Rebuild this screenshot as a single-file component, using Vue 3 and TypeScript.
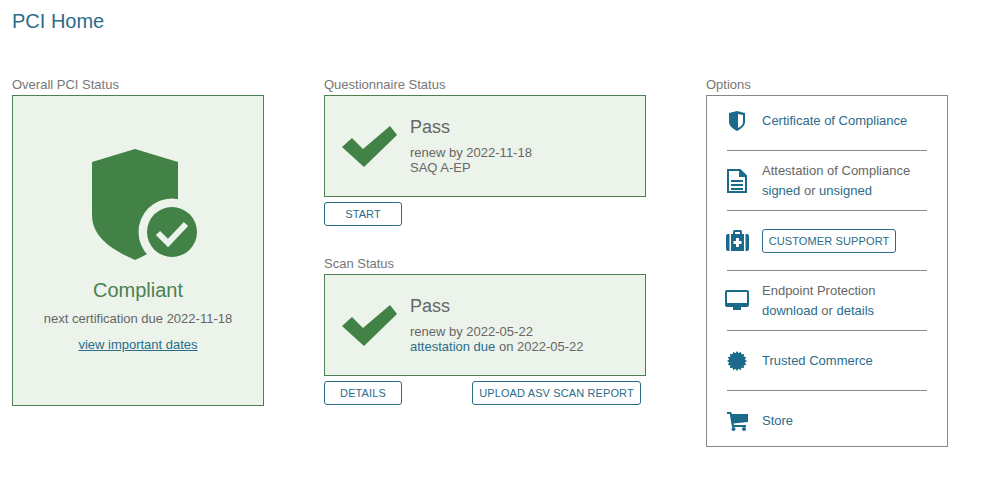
<script setup lang="ts">
const teeth = 16
const badgePoints = Array.from({ length: teeth * 2 }, (_, i) => {
  const r = i % 2 === 0 ? 10 : 8
  const a = (Math.PI * i) / teeth
  return `${(10 + r * Math.sin(a)).toFixed(2)},${(10 - r * Math.cos(a)).toFixed(2)}`
}).join(' ')
</script>

<template>
  <div class="page">
    <h1 class="title">PCI Home</h1>
    <div class="columns">
      <section class="col-left">
        <div class="label">Overall PCI Status</div>
        <div class="overall">
          <svg class="shield" width="106" height="112" viewBox="0 0 106 112">
            <path d="M43 0 L86 13 V64 C86 85 64 102 43 111 C20 101 0 88 0 66 V13 Z" fill="#428246" />
            <circle cx="80" cy="83" r="33.500" fill="#ecf3ea" />
            <circle cx="80" cy="83" r="25" fill="#428246" />
            <path d="M66 84 L76 94 L94 75" fill="none" stroke="#ecf3ea" stroke-width="6" />
          </svg>
          <div class="compliant">Compliant</div>
          <div class="due">next certification due 2022-11-18</div>
          <a class="dates">view important dates</a>
        </div>
      </section>

      <section class="col-mid">
        <div class="label">Questionnaire Status</div>
        <div class="status">
          <svg class="check" width="55" height="42" viewBox="0 0 55 42"><path d="M0 21 L10 12 L21 23 L48 0 L55 9 L22 41 Z" fill="#428246" /></svg>
          <div>
            <div class="pass">Pass</div>
            <div class="line">renew by 2022-11-18</div>
            <div class="line">SAQ A-EP</div>
          </div>
        </div>
        <div class="actions"><button class="btn wide">START</button></div>

        <div class="label scan">Scan Status</div>
        <div class="status">
          <svg class="check" width="55" height="42" viewBox="0 0 55 42"><path d="M0 21 L10 12 L21 23 L48 0 L55 9 L22 41 Z" fill="#428246" /></svg>
          <div>
            <div class="pass">Pass</div>
            <div class="line">renew by 2022-05-22</div>
            <div class="line"><a class="link">attestation due</a> on 2022-05-22</div>
          </div>
        </div>
        <div class="actions between">
          <button class="btn wide">DETAILS</button>
          <button class="btn upload">UPLOAD ASV SCAN REPORT</button>
        </div>
      </section>

      <section class="col-right">
        <div class="label">Options</div>
        <div class="options">
          <div class="opt first">
            <span class="ico"><svg width="16" height="20" viewBox="0 0 16 20"><path fill-rule="evenodd" d="M8 0 L16 2 V11 C16 15 12 18 8 20 C4 18 0 15 0 11 V2 Z M9 3 V17 C12 15.500 14 13.500 14 11 V4 Z" fill="#1c6a8a"/></svg></span>
            <div class="opt-text"><a class="link">Certificate of Compliance</a></div>
          </div>
          <div class="opt">
            <span class="ico"><svg width="20" height="24" viewBox="0 0 20 24"><path fill="none" stroke="#1c6a8a" stroke-width="2" d="M1 1 H13 L19 7 V23 H1 Z"/><path fill="#1c6a8a" d="M12 1 H14 L19 6 V8 H12 Z M4 11 H16 V13 H4 Z M4 15 H16 V17 H4 Z M4 19 H16 V21 H4 Z"/></svg></span>
            <div class="opt-text">Attestation of Compliance<br /><a class="link">signed</a> or <a class="link">unsigned</a></div>
          </div>
          <div class="opt">
            <span class="ico"><svg width="23" height="21" viewBox="0 0 23 21"><path fill="#1c6a8a" fill-rule="evenodd" d="M7 4 V1.500 Q7 0 8.500 0 H14.500 Q16 0 16 1.500 V4 H14 V2 H9 V4 Z M5 4 H18 V21 H5 Z M10 8 V11 H7.500 V14 H10 V17 H13 V14 H15.500 V11 H13 V8 Z M0 6 Q0 4 2 4 H3.500 V21 H2 Q0 21 0 19 Z M19.500 4 H21 Q23 4 23 6 V19 Q23 21 21 21 H19.500 Z"/></svg></span>
            <div class="opt-text"><button class="btn support">CUSTOMER SUPPORT</button></div>
          </div>
          <div class="opt">
            <span class="ico"><svg width="24" height="21" viewBox="0 0 24 21"><path fill="#1c6a8a" fill-rule="evenodd" d="M2 0 H22 Q24 0 24 2 V15 Q24 17 22 17 H2 Q0 17 0 15 V2 Q0 0 2 0 Z M2 2 V13 H22 V2 Z M8 17 H16 V20 H8 Z"/></svg></span>
            <div class="opt-text">Endpoint Protection<br /><a class="link">download</a> or <a class="link">details</a></div>
          </div>
          <div class="opt">
            <span class="ico"><svg width="20" height="20" viewBox="0 0 20 20"><polygon :points="badgePoints" fill="#1c6a8a"/></svg></span>
            <div class="opt-text"><a class="link">Trusted Commerce</a></div>
          </div>
          <div class="opt">
            <span class="ico"><svg width="21" height="19" viewBox="0 0 21 19"><path fill="#1c6a8a" d="M0 0 H4 L5 2 H21 V10 L6.500 11.500 L7 13 H19 V15 H5 L2.700 2 H0 Z"/><circle cx="6.500" cy="17" r="2" fill="#1c6a8a"/><circle cx="17" cy="17" r="2" fill="#1c6a8a"/></svg></span>
            <div class="opt-text"><a class="link">Store</a></div>
          </div>
        </div>
      </section>
    </div>
  </div>
</template>

<style scoped>
.page {
  box-sizing: border-box;
  width: 994px;
  height: 481px;
  padding: 10px 12px 0;
  background: #fff;
  color: #666;
  font-family: "Liberation Sans", Arial, sans-serif;
  font-size: 13px;
  overflow: hidden;
}
.title {
  margin: 0;
  font-size: 20px;
  font-weight: 400;
  line-height: 23px;
  color: #2b6c8a;
}
.columns {
  display: flex;
  margin-top: 43px;
}
.label {
  line-height: 17px;
  padding-bottom: 2px;
  color: #777;
}
.col-left { width: 252px; margin-right: 60px; }
.col-mid { width: 322px; margin-right: 60px; }
.col-right { width: 242px; }
.overall {
  box-sizing: border-box;
  height: 311px;
  border: 1px solid #4d7f52;
  background: #ecf3ea;
  display: flex;
  flex-direction: column;
  align-items: center;
  padding-top: 53px;
}
.shield { margin-left: 14px; flex: none; }
.compliant { margin-top: 17px; font-size: 20px; line-height: 24px; color: #4d7f52; }
.due { margin-top: 7px; line-height: 20px; }
.dates { margin-top: 6px; line-height: 20px; color: #2b6c8a; text-decoration: underline; }
.status {
  box-sizing: border-box;
  height: 102px;
  border: 1px solid #4d7f52;
  background: #ecf3ea;
  display: flex;
  align-items: flex-start;
  padding: 21px 0 0 17px;
}
.check { margin: 9px 13px 0 0; flex: none; }
.pass { font-size: 18px; line-height: 20px; margin-bottom: 8px; color: #666; }
.line { line-height: 15px; }
.link { color: #2b6c8a; }
.actions { display: flex; margin-top: 5px; height: 24px; }
.between { justify-content: space-between; padding-right: 5px; }
.scan { margin-top: 29px; }
.btn {
  box-sizing: border-box;
  height: 24px;
  padding: 0;
  border: 1px solid #2b6c8a;
  border-radius: 3px;
  background: #fff;
  color: #2b6c8a;
  font-family: inherit;
  font-size: 11px;
  letter-spacing: 0.12px;
}
.wide { width: 78px; }
.upload { width: 169px; }
.support { width: 134px; }
.options {
  box-sizing: border-box;
  height: 352px;
  border: 1px solid #888;
  padding: 0 20px;
}
.opt {
  display: flex;
  align-items: center;
  height: 60px;
  box-sizing: border-box;
  border-bottom: 1px solid #888;
}
.opt.first { height: 55px; padding-bottom: 4px; }
.opt:last-child { border-bottom: none; }
.ico { flex: none; width: 20px; margin-right: 15px; display: flex; justify-content: center; }
.ico svg { flex: none; }
.opt-text { line-height: 20px; }
</style>
